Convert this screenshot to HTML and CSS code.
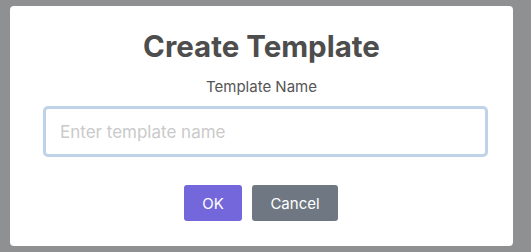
FILE: index.html
```html
<!DOCTYPE html>
<html lang="en">
<head>
<meta charset="UTF-8">
<meta name="viewport" content="width=device-width, initial-scale=1.0">
<title>Create Template</title>
<link rel="stylesheet" href="styles.css">
</head>
<body>
<div class="modal">
<h2>Create Template</h2>
<label for="template-name">Template Name</label>
<input type="text" id="template-name" placeholder="Enter template name">
<div class="actions">
<button class="button ok">OK</button>
<button class="button cancel">Cancel</button>
</div>
</div>
</body>
</html>
```

FILE: styles.css
```css
body {
font-family: Inter, 'Noto Sans', sans-serif;
background-color: #8f9092;
margin: 0;
padding: 6px 0 0 10px;
height: 252px;
box-sizing: border-box;
overflow: hidden;
}
.modal {
background-color: #fff;
width: 503px;
height: 240px;
border-radius: 4px;
box-sizing: border-box;
display: flex;
flex-direction: column;
align-items: center;
padding-top: 23px;
}
h2 {
margin: 0;
font-size: 29.5px;
font-weight: 700;
line-height: 34px;
color: #4d4d4d;
}
label {
display: block;
margin-top: 14px;
font-size: 15px;
line-height: 20px;
color: #555;
}
input {
align-self: flex-start;
margin: 9px 0 0 33px;
width: 445px;
height: 51px;
box-sizing: border-box;
border: 3px solid #bfd3e8;
border-radius: 5px;
padding: 0 14px;
font-family: inherit;
font-size: 17px;
color: #333;
outline: none;
}
input::placeholder {
color: #cacaca;
}
.actions {
display: flex;
gap: 10px;
margin-top: 28px;
padding-right: 1px;
}
.button {
height: 36px;
border: none;
border-radius: 3px;
padding: 0 18px;
color: #fff;
font-family: inherit;
font-size: 15px;
cursor: pointer;
}
.ok {
background-color: #7367db;
width: 58px;
}
.cancel {
background-color: #6f7882;
width: 86px;
}
```
